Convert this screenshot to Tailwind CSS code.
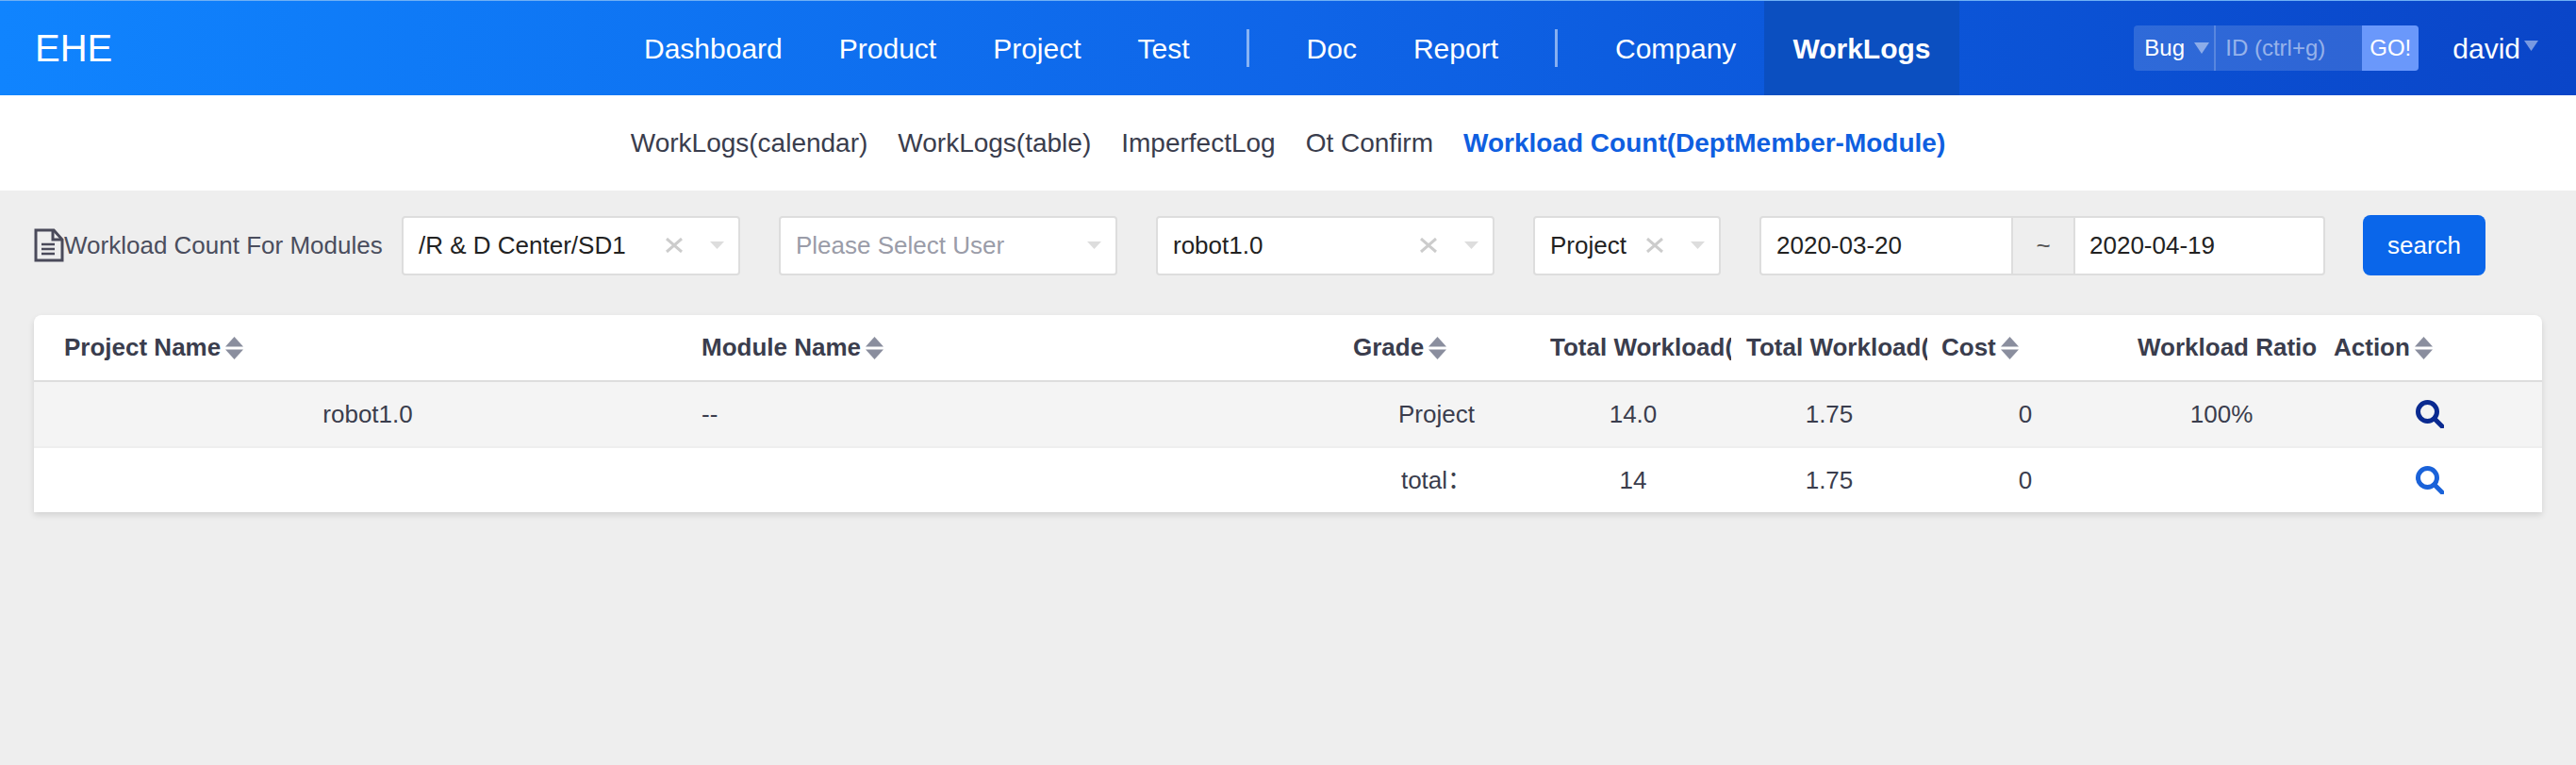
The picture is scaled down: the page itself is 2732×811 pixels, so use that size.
<!DOCTYPE html>
<html>
<head>
<meta charset="utf-8">
<title>Workload Count</title>
<script src="https://cdn.jsdelivr.net/npm/@tailwindcss/browser@4"></script>
</head>
<body class="bg-[#eeeeee] h-[811px] overflow-hidden font-['Liberation_Sans','Noto_Sans_CJK_SC',sans-serif] text-[26px] text-[#3a3d4d]">

<!-- top nav -->
<header class="flex items-stretch h-[101px] border-t border-[#6fb0f5] text-white bg-gradient-to-r from-[#1084fe] via-[#0f65e8] to-[#0a45c8]">
    <div class="w-[653px] pl-[37px] flex items-center text-[40px]">EHE</div>
    <nav class="flex items-center text-[30px]">
        <a class="px-[30px]">Dashboard</a>
        <a class="px-[30px]">Product</a>
        <a class="px-[30px]">Project</a>
        <a class="px-[30px]">Test</a>
        <span class="ml-[30px] mr-[31px] w-[3px] h-[40px] bg-white/50"></span>
        <a class="px-[30px]">Doc</a>
        <a class="px-[30px]">Report</a>
        <span class="ml-[30px] mr-[31px] w-[3px] h-[40px] bg-white/50"></span>
        <a class="px-[30px]">Company</a>
        <a class="self-stretch flex items-center px-[30px] font-bold bg-[#0b4fc0]">WorkLogs</a>
    </nav>
    <div class="ml-auto flex items-center pr-[40px]">
        <div class="flex h-[48px] w-[302px] rounded-[4px] overflow-hidden bg-white/15 text-[24px]">
            <div class="w-[87px] flex items-center pl-[11px] border-r-2 border-white/20">
                <span>Bug</span>
                <svg class="ml-[10px]" width="16" height="12" viewBox="0 0 16 12"><path d="M0 0h16L8 12z" fill="#ffffff" fill-opacity="0.45"/></svg>
            </div>
            <div class="flex-1 flex items-center pl-[10px] text-white/50">ID (ctrl+g)</div>
            <div class="w-[60px] flex items-center justify-center bg-[#6a98fb]">GO!</div>
        </div>
        <div class="ml-[36px] flex items-center text-[30px]">
            <span>david</span>
            <svg class="ml-[4px] mb-[6px]" width="15" height="11" viewBox="0 0 15 11"><path d="M0 0h15L7.500 11z" fill="#ffffff" fill-opacity="0.45"/></svg>
        </div>
    </div>
</header>

<!-- sub nav -->
<div class="h-[101px] bg-white flex items-center justify-center gap-[32px] text-[28px]">
    <a>WorkLogs(calendar)</a>
    <a>WorkLogs(table)</a>
    <a>ImperfectLog</a>
    <a>Ot Confirm</a>
    <a class="font-bold text-[#0f5fe0]">Workload Count(DeptMember-Module)</a>
</div>

<!-- filters -->
<div class="flex items-center pl-[36px] pt-[26px]">
    <div class="w-[390px] flex items-center">
        <svg width="32" height="36" viewBox="0 0 32 36" fill="none" stroke="#4a4a5a" stroke-width="3"><path d="M2 2h19l9 10v22H2z"/><path d="M20 2v10h10"/><path d="M8 17h14M8 22h14M8 27h14" stroke-width="2.5"/></svg>
        <span class="text-[26px] text-[#4a4d5d]">Workload Count For Modules</span>
    </div>

    <div class="w-[359px] h-[63px] bg-white border-2 border-[#dddddd] rounded-[4px] flex items-center pl-[16px] pr-[15px] text-[#222222]">
        <span class="flex-1">/R &amp; D Center/SD1</span>
        <svg width="18" height="16" viewBox="0 0 18 16" stroke="#cccccc" stroke-width="3"><path d="M1 1l16 14M17 1L1 15"/></svg>
        <svg class="ml-[29px]" width="15" height="8" viewBox="0 0 15 8"><path d="M0 0h15L7.500 8z" fill="#dddddd"/></svg>
    </div>

    <div class="ml-[41px] w-[359px] h-[63px] bg-white border-2 border-[#dddddd] rounded-[4px] flex items-center pl-[16px] pr-[15px] text-[#9a9ca8]">
        <span class="flex-1">Please Select User</span>
        <svg width="15" height="8" viewBox="0 0 15 8"><path d="M0 0h15L7.500 8z" fill="#dddddd"/></svg>
    </div>

    <div class="ml-[41px] w-[359px] h-[63px] bg-white border-2 border-[#dddddd] rounded-[4px] flex items-center pl-[16px] pr-[15px] text-[#222222]">
        <span class="flex-1">robot1.0</span>
        <svg width="18" height="16" viewBox="0 0 18 16" stroke="#cccccc" stroke-width="3"><path d="M1 1l16 14M17 1L1 15"/></svg>
        <svg class="ml-[29px]" width="15" height="8" viewBox="0 0 15 8"><path d="M0 0h15L7.500 8z" fill="#dddddd"/></svg>
    </div>

    <div class="ml-[41px] w-[199px] h-[63px] bg-white border-2 border-[#dddddd] rounded-[4px] flex items-center pl-[16px] pr-[15px] text-[#222222]">
        <span class="flex-1">Project</span>
        <svg width="18" height="16" viewBox="0 0 18 16" stroke="#cccccc" stroke-width="3"><path d="M1 1l16 14M17 1L1 15"/></svg>
        <svg class="ml-[29px]" width="15" height="8" viewBox="0 0 15 8"><path d="M0 0h15L7.500 8z" fill="#dddddd"/></svg>
    </div>

    <div class="ml-[41px] w-[600px] h-[63px] bg-white border-2 border-[#dddddd] rounded-[4px] flex text-[#222222]">
        <span class="w-[265px] flex items-center pl-[16px]">2020-03-20</span>
        <span class="w-[68px] flex items-center justify-center bg-[#eeeeee] border-x-2 border-[#dddddd] text-[#555555]">~</span>
        <span class="flex-1 flex items-center pl-[15px]">2020-04-19</span>
    </div>

    <button class="ml-[40px] w-[130px] h-[64px] rounded-[8px] bg-[#0a66ea] text-white text-[26px]">search</button>
</div>

<!-- table -->
<div class="mx-[36px] mt-[42px] bg-white rounded-t-[8px] shadow-[0_3px_6px_rgba(0,0,0,0.12)]">
    <div class="grid grid-cols-[692px_691px_209px_208px_208px_208px_208px_233px] h-[71px] items-center border-b-2 border-[#dddddd] font-bold whitespace-nowrap">
        <div class="pl-[32px] flex items-center">Project Name
            <svg class="ml-[5px]" width="19" height="24" viewBox="0 0 19 24" fill="#8a8e9e"><path d="M9.500 0L19 10.500H0z"/><path d="M0 13.500h19L9.500 24z"/></svg>
        </div>
        <div class="pl-[16px] flex items-center">Module Name
            <svg class="ml-[5px]" width="19" height="24" viewBox="0 0 19 24" fill="#8a8e9e"><path d="M9.500 0L19 10.500H0z"/><path d="M0 13.500h19L9.500 24z"/></svg>
        </div>
        <div class="pl-[16px] flex items-center">Grade
            <svg class="ml-[5px]" width="19" height="24" viewBox="0 0 19 24" fill="#8a8e9e"><path d="M9.500 0L19 10.500H0z"/><path d="M0 13.500h19L9.500 24z"/></svg>
        </div>
        <div class="pl-[16px] overflow-hidden">Total Workload(h)</div>
        <div class="pl-[16px] overflow-hidden">Total Workload(d)</div>
        <div class="pl-[15px] flex items-center">Cost
            <svg class="ml-[5px]" width="19" height="24" viewBox="0 0 19 24" fill="#8a8e9e"><path d="M9.500 0L19 10.500H0z"/><path d="M0 13.500h19L9.500 24z"/></svg>
        </div>
        <div class="pl-[15px] overflow-hidden">Workload Ratio</div>
        <div class="pl-[15px] flex items-center">Action
            <svg class="ml-[5px]" width="19" height="24" viewBox="0 0 19 24" fill="#8a8e9e"><path d="M9.500 0L19 10.500H0z"/><path d="M0 13.500h19L9.500 24z"/></svg>
        </div>
    </div>
    <div class="grid grid-cols-[692px_691px_209px_208px_208px_208px_208px_233px] h-[70px] items-center text-center bg-[#f4f4f4] border-b-2 border-[#eeeeee]">
        <div class="pl-[32px] pr-[16px]">robot1.0</div>
        <div class="pl-[16px] text-left">--</div>
        <div>Project</div>
        <div>14.0</div>
        <div>1.75</div>
        <div>0</div>
        <div>100%</div>
        <div class="flex justify-center">
            <svg width="30" height="30" viewBox="0 0 30 30" fill="none" stroke="#0a2a90" stroke-width="5"><circle cx="12.500" cy="12.500" r="10"/><path d="M20 20l8 8" stroke-linecap="round"/></svg>
        </div>
    </div>
    <div class="grid grid-cols-[692px_691px_209px_208px_208px_208px_208px_233px] h-[68px] items-center text-center">
        <div></div>
        <div></div>
        <div lang="zh-CN">total：</div>
        <div>14</div>
        <div>1.75</div>
        <div>0</div>
        <div></div>
        <div class="flex justify-center">
            <svg width="30" height="30" viewBox="0 0 30 30" fill="none" stroke="#1a62d9" stroke-width="5"><circle cx="12.500" cy="12.500" r="10"/><path d="M20 20l8 8" stroke-linecap="round"/></svg>
        </div>
    </div>
</div>

</body>
</html>
